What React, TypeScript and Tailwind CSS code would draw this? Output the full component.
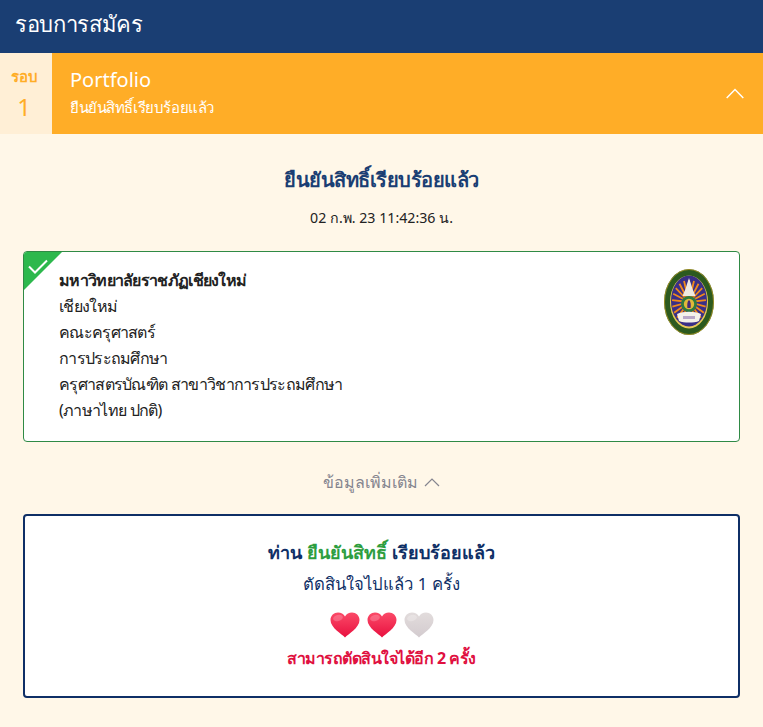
import React from "react";

function Heart({ id, from, to, shine }: { id: string; from: string; to: string; shine: string }) {
  return (
    <svg width="30" height="26" viewBox="0 0 30 26">
      <defs>
        <linearGradient id={id} x1="0" y1="0" x2="0" y2="1">
          <stop offset="0" stopColor={from} />
          <stop offset="1" stopColor={to} />
        </linearGradient>
      </defs>
      <path d="M15 25.5C12 22 .5 16 .5 8 .5 3.6 4 .6 8 .6 11 .6 13.6 2 15 4.6 16.4 2 19 .6 22 .6 26 .6 29.5 3.6 29.5 8 29.5 16 18 22 15 25.5Z" fill={`url(#${id})`} />
      <ellipse cx="8" cy="6" rx="5" ry="3" fill={shine} opacity="0.35" transform="rotate(-15 8 6)" />
    </svg>
  );
}

function Seal() {
  const rays = Array.from({ length: 19 }, (_, i) => -90 + (i - 9) * 17);
  return (
    <svg className="mr-[25px] mt-[2px] shrink-0" width="50" height="66" viewBox="0 0 50 66">
      <ellipse cx="25" cy="33" rx="25" ry="33" fill="#2c5a1f" />
      <ellipse cx="25" cy="33" rx="24.5" ry="32.5" fill="none" stroke="#c9a227" strokeWidth="0.7" />
      <ellipse cx="25" cy="33" rx="19" ry="26.5" fill="#e8c95a" />
      <ellipse cx="25" cy="32" rx="18" ry="25.5" fill="#3a2f86" />
      {rays.map((a) => (
        <line
          key={a}
          x1="25"
          y1="33"
          x2={25 + 17 * Math.cos((a * Math.PI) / 180)}
          y2={33 + 22 * Math.sin((a * Math.PI) / 180)}
          stroke="#f08a1c"
          strokeWidth="1.8"
        />
      ))}
      <path d="M25 9l2 6 1.5 5 3 7H18.500l3-7 1.500-5Z" fill="#eee9e0" />
      <circle cx="25" cy="35" r="8" fill="#2f7a3f" />
      <circle cx="25" cy="35" r="5.200" fill="#e0b93a" />
      <path d="M25 31c2 1.500 2 6 1.500 8h-3c-.5-2-.5-6.500 1.500-8Z" fill="#4a2a78" />
      <path d="M13 45c6-3 18-3 24 0l-2 7c-5 2-15 2-20 0Z" fill="#f4f1ea" />
      <path d="M19 47h12v3H19Z" fill="#b9a8c8" />
    </svg>
  );
}

export default function App() {
  return (
    <div className="w-[763px] h-[727px] bg-[#fff7e8] font-['Noto_Sans',sans-serif] overflow-hidden">
      <div className="h-[53px] bg-[#1a3e73] text-white text-[22px] leading-[30px] tracking-[-0.35px] flex items-start pt-[8px] px-[15px]">รอบการสมัคร</div>
      <div className="flex h-[81px]">
        <div className="w-[52px] bg-[#ffefd6] flex flex-col items-center pr-[4px] pt-[12px] text-[#ffad27]">
          <div className="text-[15px] font-bold leading-[22px]">รอบ</div>
          <div className="mt-[3px] text-[24px] leading-[34px]">1</div>
        </div>
        <div className="flex-1 bg-[#ffad27] text-white flex items-center justify-between pl-[18px] pr-[19px]">
          <div className="-mt-[3px]">
            <div className="text-[20px] leading-[28px]">Portfolio</div>
            <div className="text-[15px] leading-[24px] tracking-[-0.42px] mt-[1px]">ยืนยันสิทธิ์เรียบร้อยแล้ว</div>
          </div>
          <svg width="18" height="11" viewBox="0 0 18 11" fill="none" stroke="white" strokeWidth="1.5"><path d="M.7 10 9 1.500 17.300 10" /></svg>
        </div>
      </div>
      <div className="px-[23px]">
        <div className="pt-[31px] text-center text-[20px] font-bold text-[#1a3e73] leading-[30px] tracking-[-0.5px]">ยืนยันสิทธิ์เรียบร้อยแล้ว</div>
        <div className="mt-[12px] text-center text-[14.2px] text-[#222] leading-[22px]">02 ก.พ. 23 11:42:36 น.</div>
        <div className="relative mt-[22px] h-[191px] bg-white border border-[#2f8a45] rounded-[4px] pl-[35px] pt-[15px] text-[16px] leading-[26px] tracking-[-0.7px] text-[#222] overflow-hidden flex justify-between">
          <div className="absolute left-0 top-0 w-0 h-0 border-t-[38px] border-r-[38px] border-t-[#2db84d] border-r-transparent" />
          <svg className="absolute left-[4px] top-[7px]" width="20" height="15" viewBox="0 0 20 15" fill="none" stroke="white" strokeWidth="2"><path d="M1 7.500l6 6L19 1.500" /></svg>
          <div>
            <div className="font-bold">มหาวิทยาลัยราชภัฏเชียงใหม่</div>
            <div>เชียงใหม่</div>
            <div>คณะครุศาสตร์</div>
            <div>การประถมศึกษา</div>
            <div>ครุศาสตรบัณฑิต สาขาวิชาการประถมศึกษา</div>
            <div>(ภาษาไทย ปกติ)</div>
          </div>
          <Seal />
        </div>
        <div className="mt-[27px] flex justify-center items-center gap-[6px] text-[16px] leading-[26px] text-[#85858f]">
          ข้อมูลเพิ่มเติม
          <svg width="16" height="10" viewBox="0 0 16 10" fill="none" stroke="#85858f" strokeWidth="1.2"><path d="M1 9l7-7 7 7" /></svg>
        </div>
        <div className="mt-[19px] h-[184px] bg-white border-2 border-[#0f2f66] rounded-[4px] flex flex-col items-center pt-[21px]">
          <div className="text-[18px] font-bold leading-[30px] text-[#0f2f66]">ท่าน <span className="text-[#2e9e3f]">ยืนยันสิทธิ์</span> เรียบร้อยแล้ว</div>
          <div className="mt-[2px] text-[16.7px] leading-[30px] text-[#0f2f66]">ตัดสินใจไปแล้ว 1 ครั้ง</div>
          <div className="mt-[13px] flex gap-[7px]">
            <Heart id="h1" from="#fb4a68" to="#e8103f" shine="#ffb0c0" />
            <Heart id="h2" from="#fb4a68" to="#e8103f" shine="#ffb0c0" />
            <Heart id="h3" from="#e2dcdc" to="#d3cbcf" shine="#f6f3f3" />
          </div>
          <div className="mt-[6px] text-[16px] font-bold leading-[28px] tracking-[-0.5px] text-[#e0103f]">สามารถตัดสินใจได้อีก 2 ครั้ง</div>
        </div>
      </div>
    </div>
  );
}
